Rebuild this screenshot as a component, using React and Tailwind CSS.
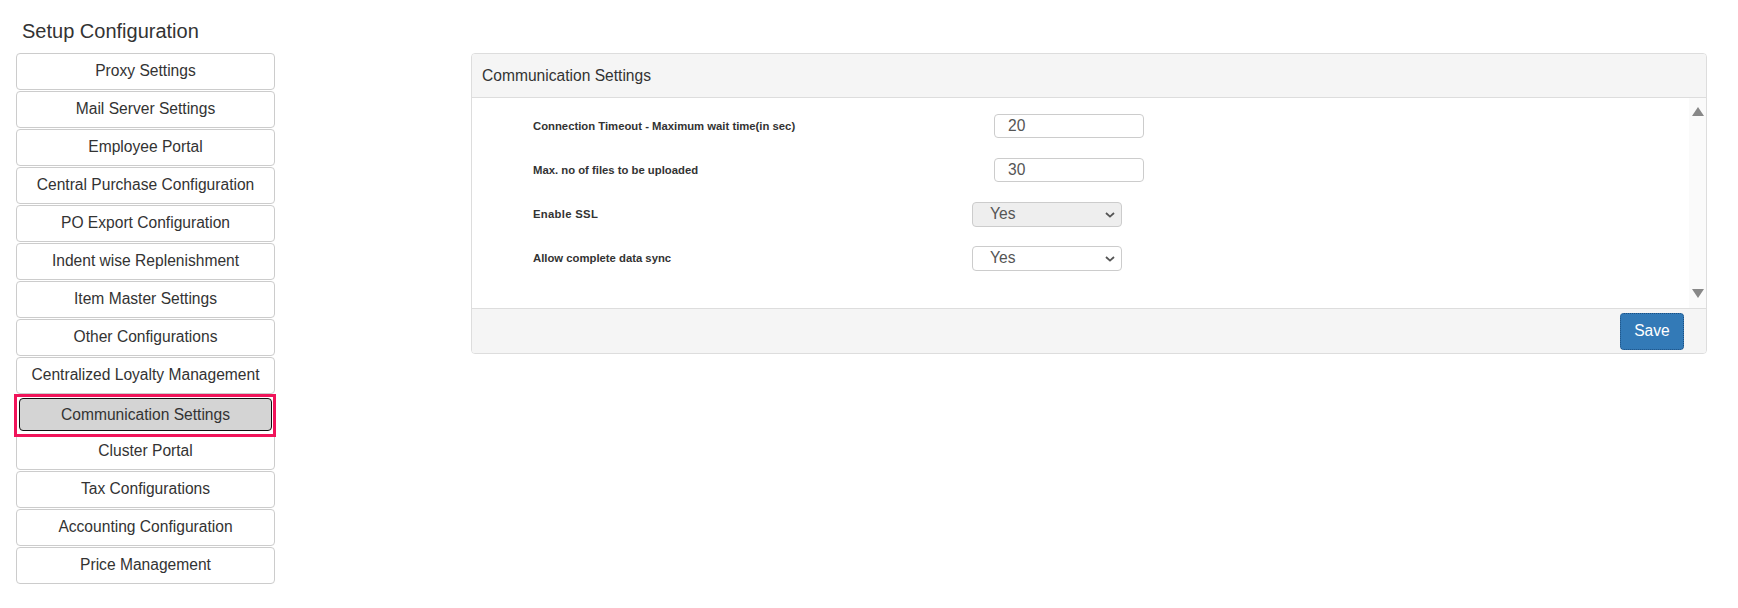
import React from "react";

const items = [
  "Proxy Settings",
  "Mail Server Settings",
  "Employee Portal",
  "Central Purchase Configuration",
  "PO Export Configuration",
  "Indent wise Replenishment",
  "Item Master Settings",
  "Other Configurations",
  "Centralized Loyalty Management",
  "Communication Settings",
  "Cluster Portal",
  "Tax Configurations",
  "Accounting Configuration",
  "Price Management",
];

function Chevron() {
  return (
    <svg width="10" height="6" viewBox="0 0 10 6" className="block">
      <path d="M1 1 L5 4.6 L9 1" fill="none" stroke="#555" strokeWidth="1.8" />
    </svg>
  );
}

function SelectBox({ gray }) {
  return (
    <div
      className={
        "relative w-[150px] h-[25px] border border-[#ccc] rounded-[4px] flex items-center pl-[17px] text-[15.6px] font-normal text-[#555] " +
        (gray ? "bg-[#eeeeee]" : "bg-white")
      }
    >
      <span className="leading-none">Yes</span>
      <div className="absolute right-[6px] top-[9px]">
        <Chevron />
      </div>
    </div>
  );
}

function InputBox({ value }) {
  return (
    <div className="w-[150px] h-[24px] border border-[#ccc] rounded-[4px] bg-white flex items-center pl-[13px] text-[15.6px] font-normal text-[#555]">
      <span className="leading-none">{value}</span>
    </div>
  );
}

export default function App() {
  return (
    <div className="w-[1738px] h-[608px] bg-white text-[#333] font-['Liberation_Sans',Arial,sans-serif] overflow-hidden">
      <div className="pt-[20px] pl-[22px] text-[20px] leading-[22px]">Setup Configuration</div>
      <div className="flex mt-[11px] pl-[16px]">
        <div className="w-[259px] flex flex-col gap-[1.5px]">
          {items.map((t) =>
            t === "Communication Settings" ? (
              <div key={t} className="relative h-[36.5px]">
                <div className="absolute z-10 -top-[1px] -left-[2px] -right-[1px] h-[43px] border-[3px] border-[#f0145a] bg-white pl-[2px] pt-[1px] pr-[1px] pb-[3px]">
                  <div className="w-full h-full border-[1.5px] border-[#111] rounded-[4px] bg-[#d4d4d4] flex items-center justify-center text-[15.6px] leading-none text-[#333]">
                    {t}
                  </div>
                </div>
              </div>
            ) : (
              <div
                key={t}
                className="h-[36.5px] border border-[#ccc] rounded-[4px] bg-white flex items-center justify-center text-[15.6px] leading-none"
              >
                {t}
              </div>
            )
          )}
        </div>

        <div className="ml-[196px] w-[1236px] self-start border border-[#ddd] rounded-[4px] overflow-hidden">
          <div className="h-[44px] bg-[#f5f5f5] border-b border-[#ddd] flex items-center pl-[10px] text-[15.6px]">
            Communication Settings
          </div>
          <div className="flex h-[210px]">
            <div className="flex-1 pt-[6px] pl-[61px] text-[11.3px] font-bold text-[#333]">
              <div className="h-[44px] flex items-center">
                <div className="w-[461px]">Connection Timeout - Maximum wait time(in sec)</div>
                <InputBox value="20" />
              </div>
              <div className="h-[44px] flex items-center">
                <div className="w-[461px]">Max. no of files to be uploaded</div>
                <InputBox value="30" />
              </div>
              <div className="h-[44px] flex items-center">
                <div className="w-[439px] tracking-[0.3px]">Enable SSL</div>
                <SelectBox gray />
              </div>
              <div className="h-[44px] flex items-center">
                <div className="w-[439px]">Allow complete data sync</div>
                <SelectBox />
              </div>
            </div>
            <div className="w-[17px] bg-[#fafafa] flex flex-col justify-between items-center pt-[9px] pb-[10px]">
              <svg width="12" height="9" viewBox="0 0 12 9" className="block">
                <polygon points="6,0 12,9 0,9" fill="#888" />
              </svg>
              <svg width="12" height="9" viewBox="0 0 12 9" className="block">
                <polygon points="0,0 12,0 6,9" fill="#888" />
              </svg>
            </div>
          </div>
          <div className="h-[45px] bg-[#f5f5f5] border-t border-[#ddd] flex items-center justify-end pr-[22px]">
            <div className="w-[64px] h-[37px] bg-[#337ab7] border border-dotted border-[#1d4f80] rounded-[4px] text-white text-[15.6px] flex items-center justify-center leading-none">
              Save
            </div>
          </div>
        </div>
      </div>
    </div>
  );
}
